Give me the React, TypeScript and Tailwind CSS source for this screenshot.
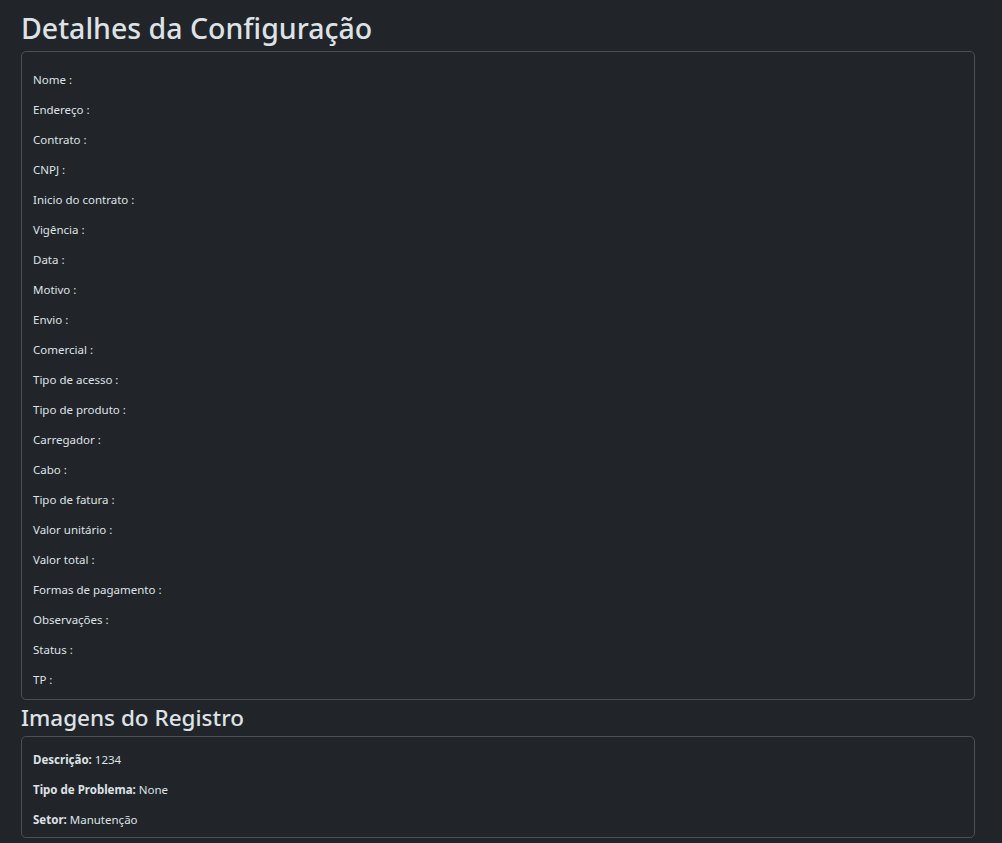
import React from "react";

const fields = [
  "Nome",
  "Endereço",
  "Contrato",
  "CNPJ",
  "Inicio do contrato",
  "Vigência",
  "Data",
  "Motivo",
  "Envio",
  "Comercial",
  "Tipo de acesso",
  "Tipo de produto",
  "Carregador",
  "Cabo",
  "Tipo de fatura",
  "Valor unitário",
  "Valor total",
  "Formas de pagamento",
  "Observações",
  "Status",
  "TP",
];

const extra = [
  ["Descrição:", "1234"],
  ["Tipo de Problema:", "None"],
  ["Setor:", "Manutenção"],
];

export default function App() {
  return (
    <div
      className="min-h-[843px] w-full bg-[#212529] text-[#dee2e6]"
      style={{ fontFamily: '"Noto Sans", "Open Sans", sans-serif' }}
    >
      <div className="ml-[21px] w-[954px]">
        <h1 className="h-[51px] pt-[8px] text-[28.5px] leading-[40px] font-medium">
          Detalhes da Configuração
        </h1>
        <div className="rounded-[5px] border border-[#495057] px-[11px] pt-[13px] pb-[4px]">
          {fields.map((f) => (
            <div key={f} className="flex h-[30px] items-center text-[11.5px]">
              {f} :
            </div>
          ))}
        </div>
        <h2 className="h-[36px] pt-[3px] text-[22.5px] leading-[30px] font-medium">
          Imagens do Registro
        </h2>
        <div className="rounded-[5px] border border-[#495057] px-[11px] pt-[8px] pb-[2px]">
          {extra.map(([k, v]) => (
            <div key={k} className="flex h-[30px] items-center text-[11.5px]">
              <span className="font-bold">{k}</span>
              <span className="ml-[3px]">{v}</span>
            </div>
          ))}
        </div>
      </div>
    </div>
  );
}
